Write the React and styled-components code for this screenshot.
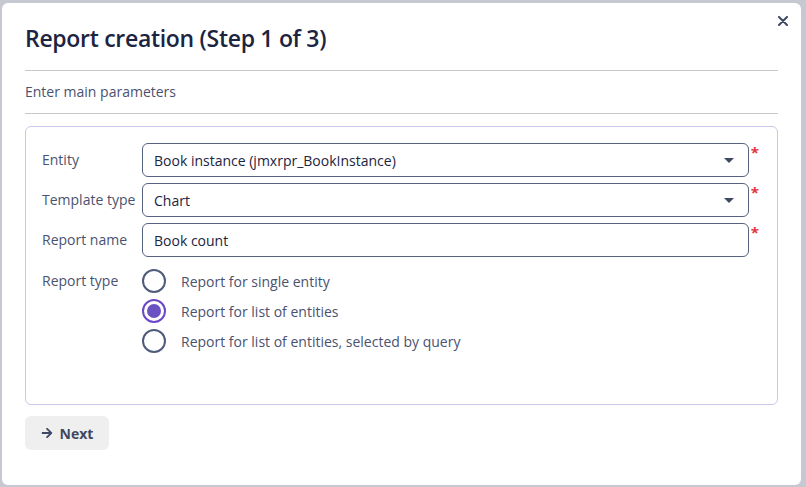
import React, { useState } from 'react';
import styled, { createGlobalStyle } from 'styled-components';
import { FaArrowRight } from 'react-icons/fa';

const GlobalStyle = createGlobalStyle`
  html, body {
    margin: 0;
    padding: 0;
    background: #c6c9d2;
    font-family: "Open Sans", "Noto Sans", sans-serif;
  }
  * { box-sizing: border-box; }
`;

const Backdrop = styled.div`
  width: 806px;
  height: 487px;
  padding: 3px 5px 2px 2px;
`;

const Modal = styled.div`
  position: relative;
  height: 100%;
  background: #ffffff;
  border-radius: 6px;
  padding: 18px 23px 0 23px;
`;

const Close = styled.button`
  position: absolute;
  top: 10px;
  right: 10px;
  border: none;
  background: none;
  padding: 0;
  width: 16px;
  height: 16px;
  display: flex;
  align-items: center;
  justify-content: center;
  cursor: pointer;
`;

const Title = styled.h1`
  margin: 0;
  font-family: "Open Sans", sans-serif;
  font-size: 23px;
  font-weight: 600;
  letter-spacing: -0.3px;
  line-height: 34px;
  color: #1b2440;
  padding-bottom: 15px;
  border-bottom: 1px solid #c8c8c8;
`;

const Subtitle = styled.div`
  font-size: 14px;
  color: #4a5270;
  line-height: 20px;
  padding: 11px 0 11px;
  border-bottom: 1px solid #c8c8c8;
`;

const Card = styled.div`
  margin-top: 12px;
  border: 1px solid #cbc6e8;
  border-radius: 6px;
  height: 279px;
  padding: 16px 28px 0 16px;
  display: flex;
  flex-direction: column;
  gap: 6px;
`;

const Row = styled.div`
  display: grid;
  grid-template-columns: 100px 1fr;
  align-items: ${(p) => (p.top ? 'start' : 'center')};
  padding-top: ${(p) => (p.top ? '6px' : '0')};
`;

const Label = styled.div`
  font-size: 14px;
  color: #4a5270;
  line-height: 20px;
  white-space: nowrap;
  padding-top: ${(p) => (p.top ? '2px' : '0')};
`;

const FieldWrap = styled.div`
  position: relative;
`;

const Field = styled.div`
  height: 34px;
  border: 1px solid #56627f;
  border-radius: 6px;
  display: flex;
  align-items: center;
  justify-content: space-between;
  padding: 0 14px 0 11px;
  font-size: 14px;
  color: #1b2440;
`;

const Required = styled.span`
  position: absolute;
  right: -10px;
  top: -1px;
  color: #e8323c;
  font-size: 15px;
  font-weight: 700;
  line-height: 20px;
`;

const Caret = styled.span`
  width: 0;
  height: 0;
  border-left: 5px solid transparent;
  border-right: 5px solid transparent;
  border-top: 5px solid #3f4863;
  margin-top: 1px;
`;

const RadioGroup = styled.div`
  display: flex;
  flex-direction: column;
  gap: 6px;
`;

const RadioRow = styled.label`
  display: flex;
  align-items: center;
  gap: 15px;
  font-size: 14px;
  color: #4a5270;
  cursor: pointer;
`;

const RadioCircle = styled.span`
  width: 24px;
  height: 24px;
  border-radius: 50%;
  border: 2px solid ${(p) => (p.checked ? '#6a48c8' : '#4f5b7a')};
  display: flex;
  align-items: center;
  justify-content: center;

  &::after {
    content: '';
    width: 14px;
    height: 14px;
    border-radius: 50%;
    background: #6a52c2;
    display: ${(p) => (p.checked ? 'block' : 'none')};
  }
`;

const Footer = styled.div`
  padding-top: 11px;
`;

const NextButton = styled.button`
  height: 34px;
  width: 84px;
  border: none;
  border-radius: 6px;
  background: #efefef;
  color: #3f4863;
  font-family: "Open Sans", sans-serif;
  font-size: 14px;
  font-weight: 700;
  display: flex;
  align-items: center;
  justify-content: center;
  gap: 7px;
  cursor: pointer;

  svg {
    width: 12px;
    height: 12px;
  }
`;

const options = [
  'Report for single entity',
  'Report for list of entities',
  'Report for list of entities, selected by query',
];

export default function App() {
  const [type, setType] = useState(1);

  return (
    <>
      <GlobalStyle />
      <Backdrop>
        <Modal>
          <Close aria-label="Close">
            <svg width="10" height="10" viewBox="0 0 10 10">
              <path d="M1 1L9 9M9 1L1 9" stroke="#3f4863" strokeWidth="2" strokeLinecap="round" />
            </svg>
          </Close>
          <Title>Report creation (Step 1 of 3)</Title>
          <Subtitle>Enter main parameters</Subtitle>
          <Card>
            <Row>
              <Label>Entity</Label>
              <FieldWrap>
                <Field>
                  Book instance (jmxrpr_BookInstance)
                  <Caret />
                </Field>
                <Required>*</Required>
              </FieldWrap>
            </Row>
            <Row>
              <Label>Template type</Label>
              <FieldWrap>
                <Field>
                  Chart
                  <Caret />
                </Field>
                <Required>*</Required>
              </FieldWrap>
            </Row>
            <Row>
              <Label>Report name</Label>
              <FieldWrap>
                <Field>Book count</Field>
                <Required>*</Required>
              </FieldWrap>
            </Row>
            <Row top>
              <Label top>Report type</Label>
              <RadioGroup>
                {options.map((o, i) => (
                  <RadioRow key={o} onClick={() => setType(i)}>
                    <RadioCircle checked={type === i} />
                    {o}
                  </RadioRow>
                ))}
              </RadioGroup>
            </Row>
          </Card>
          <Footer>
            <NextButton>
              <FaArrowRight />
              Next
            </NextButton>
          </Footer>
        </Modal>
      </Backdrop>
    </>
  );
}
